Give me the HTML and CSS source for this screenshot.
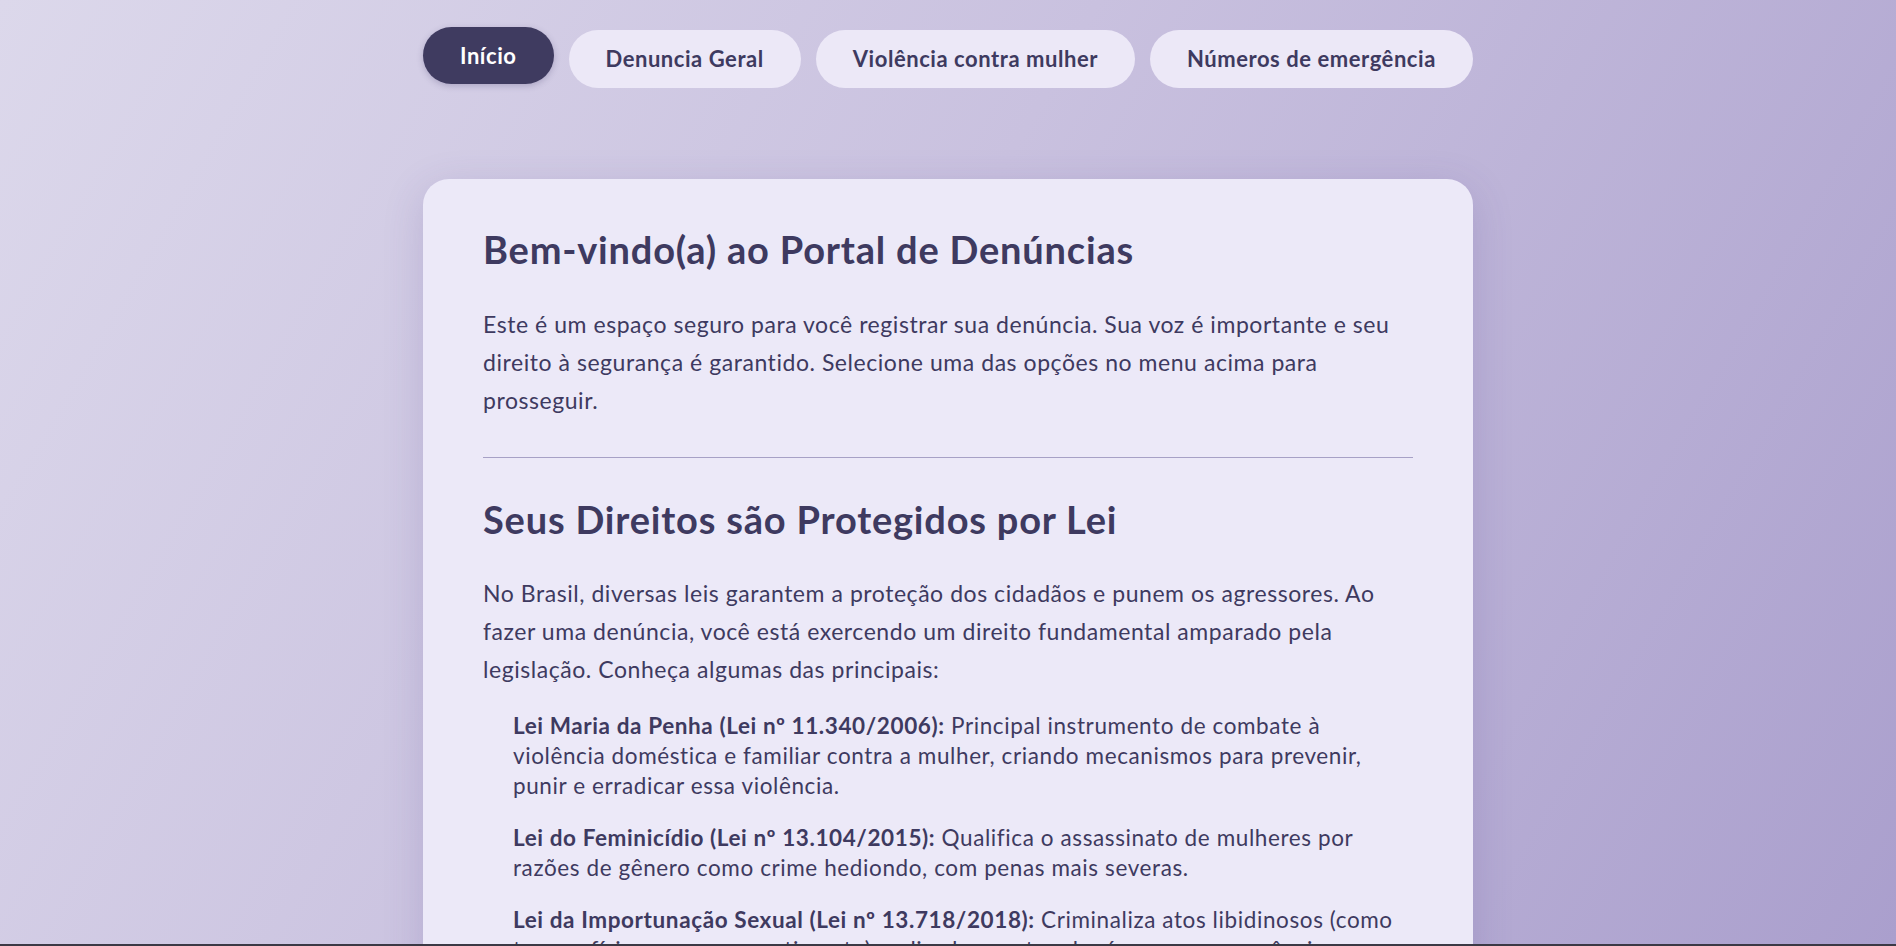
FILE: index.html
```
<!DOCTYPE html>
<html lang="pt-BR">
<head>
  <meta charset="UTF-8">
  <meta name="viewport" content="width=device-width, initial-scale=1.0">
  <title>Portal de Denúncias</title>
  <link rel="stylesheet" href="styles.css">
</head>
<body>
  <div class="page">
    <nav class="menu">
      <a href="#" class="pill active">Início</a>
      <a href="#" class="pill">Denuncia Geral</a>
      <a href="#" class="pill">Violência contra mulher</a>
      <a href="#" class="pill">Números de emergência</a>
    </nav>
    <main class="card">
      <h1>Bem-vindo(a) ao Portal de Denúncias</h1>
      <p>Este é um espaço seguro para você registrar sua denúncia. Sua voz é importante e seu direito à segurança é garantido. Selecione uma das opções no menu acima para prosseguir.</p>
      <hr>
      <h2>Seus Direitos são Protegidos por Lei</h2>
      <p>No Brasil, diversas leis garantem a proteção dos cidadãos e punem os agressores. Ao fazer uma denúncia, você está exercendo um direito fundamental amparado pela legislação. Conheça algumas das principais:</p>
      <ul class="laws">
        <li><strong>Lei Maria da Penha (Lei nº 11.340/2006):</strong> Principal instrumento de combate à violência doméstica e familiar contra a mulher, criando mecanismos para prevenir, punir e erradicar essa violência.</li>
        <li><strong>Lei do Feminicídio (Lei nº 13.104/2015):</strong> Qualifica o assassinato de mulheres por razões de gênero como crime hediondo, com penas mais severas.</li>
        <li><strong>Lei da Importunação Sexual (Lei nº 13.718/2018):</strong> Criminaliza atos libidinosos (como toques físicos sem consentimento) realizados contra alguém sem sua anuência, em locais públicos ou privados.</li>
        <li><strong>Estatuto da Criança e do Adolescente (Lei nº 8.069/1990):</strong> Garante a proteção integral de crianças e adolescentes contra qualquer forma de negligência, violência ou exploração.</li>
      </ul>
    </main>
  </div>
  <div class="bottom-bar"></div>
</body>
</html>
```
FILE: styles.css
```
* {
  margin: 0;
  padding: 0;
  box-sizing: border-box;
}
html, body {
  min-height: 100%;
}
body {
  font-family: Lato, "Noto Sans", sans-serif;
  color: #3e3a60;
  background: linear-gradient(120deg, #dcd8eb 0%, #c9c1df 45%, #aa9fcd 100%) fixed;
}
.page {
  width: 1050px;
  margin: 0 auto;
  padding-top: 30px;
}
.menu {
  display: flex;
  align-items: center;
  gap: 15px;
}
.pill {
  display: block;
  height: 58px;
  line-height: 58px;
  padding: 0 37px;
  border-radius: 29px;
  background-color: #ece8f7;
  color: #3e3a60;
  font-size: 22px;
  font-weight: 700;
  letter-spacing: 0.55px;
  text-decoration: none;
}
.pill.active {
  height: 57px;
  line-height: 57px;
  background-color: #3f3b60;
  color: #fff;
  transform: translateY(-4px);
  box-shadow: 0 2px 6px rgba(60, 50, 100, 0.25);
}
.card {
  margin-top: 91px;
  padding: 48px 60px 60px;
  background-color: #ece9f8;
  border-radius: 26px;
  box-shadow: 0 10px 40px rgba(80, 60, 140, 0.18);
}
h1, h2 {
  font-size: 38px;
  font-weight: 700;
  line-height: 1.2;
  letter-spacing: 0.8px;
  color: #3e3a60;
}
p {
  font-size: 23px;
  letter-spacing: 0.55px;
  line-height: 38px;
  margin-top: 32px;
}
hr {
  border: 0;
  border-top: 1px solid #a7a1c6;
  margin: 38px 0 39px;
}
.laws {
  list-style: none;
  padding-left: 30px;
  margin-top: 23px;
}
.laws li {
  font-size: 22.5px;
  letter-spacing: 0.6px;
  line-height: 30px;
  margin-bottom: 22px;
}
.laws strong {
  font-weight: 700;
}
.bottom-bar {
  position: fixed;
  left: 0;
  right: 0;
  bottom: 0;
  height: 2px;
  background-color: #3b3945;
}
```
